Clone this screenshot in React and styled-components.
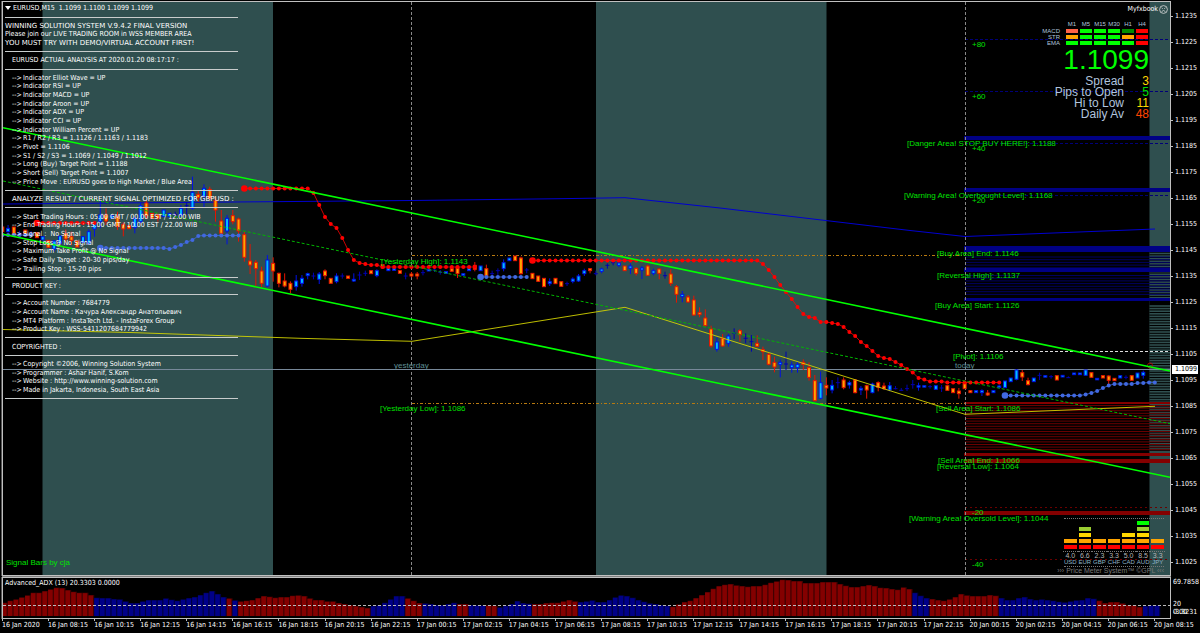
import React from 'react';
import styled, { createGlobalStyle } from 'styled-components';

const GlobalStyle = createGlobalStyle`
  * { box-sizing: border-box; }
  body {
    margin: 0;
    background: #000;
    color: #fff;
    font-family: "DejaVu Sans Condensed", "DejaVu Sans", sans-serif;
    font-size: 7px;
  }
`;

const Terminal = styled.main`
  display: grid;
  grid-template-columns: 1fr 29px;
  padding: 1px 0 0 2px;
  background: #000;
`;
const Pane = styled.section`
  position: relative;
  border: 1px solid #c0c0c0;
  margin-bottom: ${({ $gap }) => ($gap ? '1px' : '0')};
  box-shadow: ${({ $gap }) => ($gap ? '0 1px 0 #808080, -1px 0 0 #555' : '-1px 0 0 #555')};
`;
const Plot = styled.svg`
  display: block;
  width: 100%;
  height: auto;
`;
const ChartText = styled.text`
  font-family: "Liberation Sans", Arial, sans-serif;
  font-size: 8px;
  fill: ${({ $dim }) => ($dim ? '#5f8f94' : '#00e000')};
`;

/* left comment block */
const Comment = styled.div`
  position: absolute;
  top: 2px;
  left: 2px;
  width: 260px;
  height: 399px;
  display: grid;
  grid-auto-rows: 1fr;
  align-items: center;
  line-height: 8px;
  white-space: pre;
`;
const Line = styled.div`
  display: flex;
  padding-left: ${({ $indent }) => ($indent ? '7px' : '0')};
  font-family: ${({ $wide }) => ($wide ? '"DejaVu Sans", sans-serif' : 'inherit')};
`;
const Title = styled.h1`
  display: flex;
  align-items: center;
  gap: 2px;
  margin: 0;
  font-size: 7px;
  font-weight: 400;
`;
const Arrow = styled.span`
  width: 11px;
`;
const Rule = styled.hr`
  width: 233px;
  margin: 0;
  border: 0;
  border-top: 1px solid #c8cccc;
`;
const Caret = styled.svg`
  width: 6px;
  height: 4px;
`;
const Credit = styled.div`
  position: absolute;
  left: 3px;
  bottom: 7px;
  font: 8px/10px "Liberation Sans", Arial, sans-serif;
  color: #00e000;
`;

/* right hand info block */
const Advisor = styled.div`
  position: absolute;
  top: 2px;
  right: 2px;
  display: flex;
  align-items: center;
  gap: 1px;
  line-height: 10px;
`;
const Info = styled.div`
  position: absolute;
  top: 17px;
  right: 20px;
  display: flex;
  flex-direction: column;
  align-items: flex-end;
  font-family: "Liberation Sans", Arial, sans-serif;
`;
const SignalTable = styled.table`
  border-spacing: 2px;
  font-size: 6px;
  line-height: 4px;
  color: #b0c4de;
  th {
    padding: 0;
    height: 4px;
    font-weight: 400;
    text-align: right;
  }
  thead th {
    height: 6px;
    line-height: 6px;
    text-align: center;
  }
  th:first-child { padding-right: 4px; }
`;
const Signal = styled.td`
  width: 12px;
  height: 4px;
  padding: 0;
  background: ${({ $color }) => $color};
`;
const Price = styled.div`
  margin: 0 1px 4px 0;
  font-size: 28px;
  line-height: 25px;
  color: #0f0;
`;
const Stats = styled.dl`
  display: grid;
  grid-template-columns: auto 25px;
  margin: 0 1px 0 0;
  font-size: 12px;
  line-height: 11px;
  text-align: right;
  color: #b0c4de;
`;
const Stat = styled.dd`
  margin: 0;
  color: ${({ $color }) => $color};
`;

/* currency strength */
const Meter = styled.div`
  position: absolute;
  right: 6px;
  bottom: 0;
  width: 112px;
  display: flex;
  flex-direction: column;
  align-items: flex-end;
  font-family: "Liberation Sans", Arial, sans-serif;
`;
const MeterGrid = styled.div`
  display: grid;
  grid-template-columns: repeat(7, 1fr);
  column-gap: 2px;
  align-items: end;
  width: 100px;
  border-top: 1px dotted #777;
  border-bottom: 1px dotted #777;
  padding-top: 2px;
`;
const Currency = styled.div`
  display: flex;
  flex-direction: column;
  gap: 2px;
`;
const Block = styled.span`
  height: 4px;
  background: ${({ $color }) => $color};
`;
const Reading = styled.span`
  border-top: ${({ $code }) => ($code ? '0' : '1px dotted #777')};
  margin: ${({ $code }) => ($code ? '-2px -1px 0' : '0 -1px')};
  font-size: ${({ $code }) => ($code ? '6px' : '7px')};
  line-height: 7px;
  text-align: center;
  color: ${({ $code }) => ($code ? '#8fb4c8' : '#b4b4b4')};
`;
const MeterFooter = styled.div`
  font-size: 7px;
  line-height: 8px;
  white-space: nowrap;
  color: #787878;
`;

/* axes */
const PriceAxis = styled.aside`
  position: relative;
  padding-top: 2px;
`;
const PriceTick = styled.div`
  display: flex;
  align-items: center;
  gap: 2px;
  height: 26px;
  &::before {
    content: '';
    width: 2px;
    height: 1px;
    background: #c0c0c0;
  }
`;
const CurrentPrice = styled.div`
  position: absolute;
  top: 364px;
  left: 1px;
  right: 2px;
  padding-left: 3px;
  background: #fff;
  color: #000;
  line-height: 9px;
`;
const AdxAxis = styled.aside`
  display: grid;
  grid-template-rows: 22px 8px 8px;
  padding-left: 2px;
  line-height: 11px;
`;
const Overlap = styled.div`
  display: grid;
  span { grid-area: 1 / 1; }
`;
const TimeAxis = styled.footer`
  grid-column: 1 / -1;
  display: grid;
  grid-template-columns: repeat(26, 1fr);
  height: 14px;
`;
const Time = styled.time`
  white-space: nowrap;
  line-height: 8px;
  &::before {
    content: '';
    display: block;
    width: 1px;
    height: 2px;
    background: #c0c0c0;
  }
`;
const AdxTitle = styled.h2`
  position: absolute;
  top: 1px;
  left: 2px;
  margin: 0;
  font-size: 7px;
  font-weight: 400;
  line-height: 9px;
`;

const STEP = 5.7625;
const barX = (k) => 2.3 + STEP * k;

// '-' rule, '>' arrow item, '#' heading, '=' banner
const comment = [
  '-',
  '=WINNING SOLUTION SYSTEM V.9.4.2 FINAL VERSION',
  'Please join our LIVE TRADING ROOM in WSS MEMBER AREA',
  '=YOU MUST TRY WITH DEMO/VIRTUAL ACCOUNT FIRST!',
  '-',
  '#EURUSD ACTUAL ANALYSIS AT 2020.01.20 08:17:17 :',
  '-',
  '>Indicator Elliot Wave = UP',
  '>Indicator RSI = UP',
  '>Indicator MACD = UP',
  '>Indicator Aroon = UP',
  '>Indicator ADX = UP',
  '>Indicator CCI = UP',
  '>Indicator William Percent = UP',
  '>R1 / R2 / R3 = 1.1126 / 1.1163 / 1.1183',
  '>Pivot = 1.1106',
  '>S1 / S2 / S3 = 1.1069 / 1.1049 / 1.1012',
  '>Long (Buy) Target Point = 1.1188',
  '>Short (Sell) Target Point = 1.1007',
  '>Price Move : EURUSD goes to High Market / Blue Area',
  '-',
  '#=ANALYZE RESULT / CURRENT SIGNAL OPTIMIZED FOR GBPUSD :',
  '-',
  '>Start Trading Hours : 05.00 GMT / 00.00 EST / 12.00 WIB',
  '>End Trading Hours : 15.00 GMT / 10.00 EST / 22.00 WIB',
  '>Signal :  No Signal',
  '>Stop Loss @ No Signal',
  '>Maximum Take Profit @ No Signal',
  '>Safe Daily Target : 20-30 pips/day',
  '>Trailing Stop : 15-20 pips',
  '-',
  '#PRODUCT KEY :',
  '-',
  '>Account Number : 7684779',
  '>Account Name : Качура Александр Анатольевич',
  '>MT4 Platform : InstaTech Ltd. - InstaForex Group',
  '>Product Key : WSS-5411207684779942',
  '-',
  '#COPYRIGHTED :',
  '-',
  '>Copyright ©2006, Winning Solution System',
  '>Programmer : Ashar Hanif, S.Kom',
  '>Website : http://www.winning-solution.com',
  '>Made in Jakarta, Indonesia, South East Asia',
  '-',
];

// each run: first bar, top offset, bars as "kind bodyTop bodyBottom high low" in thirds of a unit
const candleRuns = [
  [0, 165, `r 186 200 183 203,b 190 200 180 203,r 186 208,n 205 197 212,r 195 212,n 205 198 212,r 203 218,b 215 225,
    r 226 247,b 228 252 225 260,b 213 236,r 206 222 193 232,r 215 226 200 240,r 228 246,b 215 232,b 200 235 193 240,
    b 176 192 168 215,b 150 170 108 190,r 150 168 130 180,b 152 160,r 155 185 140 195,r 178 192 172 214,r 182 191,
    b 160 188 155 205,b 122 170 112 175,r 114 152 108 162,r 145 160,r 150 160 145 170,b 135 155,b 145 155,n 148 140 156,
    b 130 150 120 155,n 122 112 148,b 82 130 35 134,r 88 98 78 110,b 70 94 58 126,r 73 100 65 104,r 106 135 95 170,
    r 168 205 135 210,b 160 198 150 238,r 152 170 135 178,r 162 198 158 230`],
  [42, 170, `r 194 262 185 275,r 273 285 222 312,r 277 296 270 348,r 303 340 290 352,b 270 348 255 352,r 280 303 262 335,
    r 310 340 308 352,r 333 348 310 352,r 340 358 334 370,b 333 350 315 362,b 325 340 315 350,b 311 317 308 328,n 318 308 328,
    b 312 328 306 342,r 303 317 298 328,r 325 340,b 318 335 310 340,n 318 310 326,r 318 325,b 328 333 310 336,n 315 305 330,
    n 310 302 318,r 302 311,b 302 317 298 322,r 284 294,b 294 302,b 296 301,r 302 310,n 318 308 328,r 312 318 306 322,
    r 312 318 306 328,n 308 300 316,b 298 303,n 300 292 306,n 307 300 314,b 305 310,r 296 304,r 292 311 288 324,b 311 316,
    b 296 302,r 286 298 276 304,b 288 302,r 296 318 284 320,n 311 302 318,n 302 295 315,b 278 296 268 304,b 264 272,
    r 258 272,r 264 311 260 314,n 300 294 310,r 310 326,r 318 334,r 325 350,b 335 341 325 348,r 325 341`],
  [97, 180, `r 305 319,n 311 305 318,b 297 304 292 310,b 288 303 282 306,b 272 281 266 288,r 266 272 264 280,n 281 272 286,
    b 267 274 263 280,n 256 250 266,n 248 242 256,b 249 256 242 262,r 258 272,b 258 265 250 282,r 265 280 262 287,
    b 264 270 258 297,r 258 286 254 288,b 272 280 266 286,r 267 280 265 298,n 287 275 296,r 282 310 268 318,
    r 320 343 315 368,b 343 350 333 367,r 351 366 345 368,r 360 405 347 407,r 398 404 382 412,r 414 437 388 440,
    r 447 498 437 503,b 486 508 472 515,r 475 498 462 500,b 468 490 462 500,n 460 445 477,r 452 464 448 485,
    n 475 460 490,n 485 465 515,r 490 499 466 502,r 509 515 500 540,r 523 553 518 556,r 547 561 530 577,
    b 547 553 538 592,n 552 515 570,b 555 563 545 578,b 553 563 545 578,r 547 553 538 570,r 563 592 547 602,
    r 602 662 585 664,b 608 655 575 658,r 616 624 592 646,b 616 630 600 640,n 608 592 625,r 600 623 592 628,
    b 608 615 602 626,r 600 638 597 640,b 625 630 618 645,r 617 630 614 656,b 612 638 608 640,r 608 622 604 634,
    r 618 626 608 630,b 617 630 606 634,n 626 618 628,n 631 624 632,n 626 614 633`],
  [158, 350, `n 104 90 116,b 107 111 98 122,b 107 111,n 110 105 116,b 107 118,n 114 105 126,r 107 121,r 116 128,
    r 123 131 114 146,r 100 116,r 122 128,b 122 128,b 122 128 118 138,r 129 135 120 138,b 122 128,b 108 112 104 116,
    b 93 113,b 84 95,b 60 88 58 91,r 68 81 60 93,r 92 104 83 106,b 84 95,n 76 68 90,b 77 81,n 80 75 86,r 77 90,
    b 76 81,n 83 79 84,b 69 74,b 69 74,b 60 76,r 68 82,b 85 89,r 77 84,r 78 91 76 104,r 85 92,b 77 84,n 82 76 88,
    r 77 91,b 69 84,b 67 76 62 86`],
];

const candles = candleRuns.flatMap(([start, top, rows]) =>
  rows.split(',').map((row, i) => {
    const [kind, ...v] = row.trim().split(/\s+/);
    const y = v.map((n) => top + Number(n) / 3);
    if (kind === 'n') return { k: start + i, kind, open: y[0], close: y[0], high: y[1], low: y[2] };
    return { k: start + i, kind, open: y[0], close: y[1], high: y[2] ?? y[0], low: y[3] ?? y[1] };
  })
);

const flat = (n, y) => Array(n).fill(y);
const trails = [
  { start: 0, color: '#4169e1', small: true, ys: flat(6, 235) },
  { start: 6, color: '#f00', ys: flat(11, 223) },
  { start: 17, color: '#4169e1', ys: [...flat(12, 248), 249, 247, 245, 242, 240, 236, ...flat(7, 235.5)] },
  { start: 42, color: '#f00', ys: [...flat(12, 188.5), 193, 205, 217, 224, 228, 238, 250, 260, 263, 264, 265, 265, ...flat(17, 267)] },
  { start: 83, color: '#4169e1', ys: flat(9, 277) },
  {
    start: 92,
    color: '#f00',
    ys: [...flat(40, 260.5), 264, 270, 277, 285, 292, 299, 307, 314, 317, 318, 322, 322, 323, 324, 327, 332, 336, 342, 346,
      351, 356, 358, 359, 362, 365, 369, 372.5, 378, 379.5, 381.5, 381.5, 381.5, ...flat(10, 382.5)],
  },
  { start: 174, color: '#4169e1', ys: [...flat(13, 395.5), 395.5, 394.5, 393, 391, 388, 385.5, 384, 384, 384, 384, 383, 383, 382.5, 382.5] },
];

// ADX histogram runs, tops in thirds above the baseline
const adxRuns = [
  ['r', [188, 182, 178, 172, 166, 158, 158, 153, 148, 143, 144, 150, 155, 158, 158, 165]],
  ['b', [173, 174, 174, 177, 178, 184, 189, 189, 184, 180, 180, 180, 175, 179, 182, 178, 174, 171, 165, 158, 153, 162, 171]],
  ['r', [175]],
  ['b', [181]],
  ['r', [184, 182, 180, 174, 168, 170, 173, 171, 171, 167, 166, 168, 175, 180, 180, 184, 184, 189, 192, 195, 198, 201, 204]],
  ['b', [198, 196, 188, 178, 168, 168]],
  ['r', [175, 182, 189]],
  ['b', [190, 192, 195, 195, 192, 188]],
  ['r', [192, 192]],
  ['b', [195, 196, 196]],
  ['r', [196, 197]],
  ['b', [202, 197, 192, 183, 189, 191]],
  ['r', [192, 192, 189, 188, 188, 184, 180, 184]],
  ['b', [186, 184, 181, 186, 186, 180, 172, 166, 168, 173, 180, 185, 190, 192, 195, 197]],
  ['r', [200, 193, 186, 182, 174, 165, 156, 146, 138, 134, 132, 136, 138, 140, 138, 138, 134, 128, 124, 119, 120, 123, 123,
    129, 129, 129, 126, 126, 126, 132, 137, 141, 141, 138, 135, 138, 143, 144, 147, 149, 142, 147]],
  ['b', [158, 167, 174]],
  ['r', [177, 180, 182, 178, 171, 162, 166, 168, 168, 168, 165, 167]],
  ['b', [174, 180, 180, 174, 171, 177, 180, 178, 180, 182, 185, 187, 184, 181, 180, 174, 176]],
  ['r', [182, 189, 186, 186, 190, 195, 196, 201]],
  ['b', [198, 196, 196]],
];
const adxBars = adxRuns.flatMap(([kind, tops]) => tops.map((t) => ({ kind, y: 540 + t / 3 })));

const areaLabels = [
  [907, 146, '[Danger Area! STOP BUY HERE!]: 1.1188'],
  [904, 198, '[Warning Area! Overbought Level]: 1.1168'],
  [937, 256, '[Buy Area] End: 1.1146'],
  [937, 278, '[Reversal High]: 1.1137'],
  [935, 308, '[Buy Area] Start: 1.1126'],
  [953, 359, '[Pivot]: 1.1106'],
  [936, 411, '[Sell Area] Start: 1.1086'],
  [938, 463, '[Sell Area] End: 1.1066'],
  [937, 469, '[Reversal Low]: 1.1064'],
  [909, 521, '[Warning Area! Oversold Level]: 1.1044'],
  [381, 264, '[Yesterday High]: 1.1143'],
  [380, 411, '[Yesterday Low]: 1.1086'],
  [972, 47, '+80'],
  [972, 99, '+60'],
  [972, 151, '+40'],
  [972, 203, '+20'],
  [972, 515, '-20'],
  [972, 567, '-40'],
];

const prices = Array.from({ length: 22 }, (_, i) => (1.1235 - i * 0.001).toFixed(4));

const hour = (h) => `${String(h).padStart(2, '0')}:15`;
const times = [
  '16 Jan 2020',
  ...[8, 10, 12, 14, 16, 18, 20, 22].map((h) => `16 Jan ${hour(h)}`),
  ...[0, 2, 4, 6, 8, 10, 12, 14, 16, 18, 20, 22].map((h) => `17 Jan ${hour(h)}`),
  ...[0, 2, 4, 6, 8].map((h) => `20 Jan ${hour(h)}`),
];

const frames = ['M1', 'M5', 'M15', 'M30', 'H1', 'H4'];
const signals = [
  ['MACD', ['#ff6347', '#0f0', '#0f0', '#0f0', '#008c00', '#f00']],
  ['STR', ['#ffa500', '#0f0', '#0f0', '#0f0', '#ffa500', '#f00']],
  ['EMA', ['#0f0', '#0f0', '#0f0', '#0f0', '#0f0', '#f00']],
];
const stats = [
  ['Spread', '3', '#ffd700'],
  ['Pips to Open', '5', '#00e000'],
  ['Hi to Low', '11', '#ffd700'],
  ['Daily Av', '48', '#ff4500'],
];
const levels = ['#f00', '#ffa500', '#ffd700', '#9acd32', '#0f0'];
const currencies = [
  ['USD', '4.0', 2],
  ['EUR', '6.6', 4],
  ['GBP', '2.3', 2],
  ['CHF', '3.3', 2],
  ['CAD', '5.0', 3],
  ['AUD', '8.5', 5],
  ['JPY', '3.3', 2],
];

const stripes = (from, to, step) => {
  const out = [];
  for (let y = from; y < to; y += step) out.push(y);
  return out;
};

const Candle = ({ k, kind, open, close, high, low }) => {
  const x = barX(k);
  if (kind === 'n') {
    return <path d={`M${x} ${high}V${low}M${x - 2} ${open}H${x + 2}`} stroke="#0000b4" fill="none" />;
  }
  const up = kind === 'b';
  return (
    <g stroke={up ? '#0010e6' : '#e61400'}>
      <path d={`M${x} ${high}V${low}`} />
      <rect x={x - 1.5} y={open} width="3" height={Math.max(close - open, 1.5)} fill={up ? '#00bfff' : '#ffa500'} />
    </g>
  );
};

const Trail = ({ start, color, small, ys }) => (
  <g fill={color}>
    <polyline points={ys.map((y, i) => `${barX(start + i)},${y}`).join(' ')} fill="none" stroke={color} strokeWidth="0.8" />
    {ys.map((y, i) => (
      <circle key={i} cx={barX(start + i)} cy={y} r={i === 0 && !small ? 3.3 : 2} />
    ))}
  </g>
);

const PriceChart = () => (
  <Plot viewBox="3 2 1167 573" role="img" aria-label="EURUSD M15 price chart">
    <g fill="#2f4f4f">
      <rect x="42.5" y="2" width="230.5" height="573" />
      <rect x="596" y="2" width="230.5" height="573" />
      <rect x="1149.5" y="2" width="20.5" height="573" />
    </g>
    <rect x="1149.5" y="252" width="20.5" height="200" fill="#000" />
    <g stroke="#2f4f4f" strokeWidth="1.6">
      {[...stripes(253.5, 298, 2.6), ...stripes(306, 452, 2.6)].map((y) => (
        <path key={y} d={`M1149.5 ${y}H1170`} />
      ))}
    </g>

    <g stroke="#000078">
      {[...stripes(257, 268, 2.7), ...stripes(275.5, 297, 2.7)].map((y) => (
        <path key={y} d={`M965 ${y}H1170`} strokeWidth="0.8" />
      ))}
      <path d="M965 39.5H1170M965 91.5H1170M965 143.5H1170M965 195.5H1170" strokeDasharray="3 2" />
    </g>
    <g fill="#000084">
      <rect x="964" y="136" width="206" height="4" />
      <rect x="964" y="188" width="206" height="4" />
      <rect x="964" y="246" width="206" height="6" />
      <rect x="964" y="268" width="206" height="4" />
      <rect x="964" y="298" width="206" height="3" />
    </g>
    <g stroke="#6a0000">
      {stripes(405.5, 452, 2.6).map((y) => (
        <path key={y} d={`M965 ${y}H1170`} />
      ))}
      <path d="M965 507.5H1170M965 559.5H1170" strokeDasharray="2 3" />
    </g>
    <g fill="#840000">
      <rect x="964" y="402" width="206" height="2" />
      <rect x="964" y="453" width="206" height="3" />
      <rect x="964" y="459" width="206" height="4" />
      <rect x="964" y="511" width="206" height="4" />
    </g>

    <path d="M412 255.5H965M412 403.5H965" stroke="#b87a10" strokeDasharray="3 2 1 2" />
    <path d="M965 351.5H1170" stroke="#ddd" strokeDasharray="3 2" />
    <path d="M411.5 2V575M965.5 2V575" stroke="#888" strokeDasharray="3 2" />
    <path d="M3 369.5H1170" stroke="#778899" />

    <polyline points="3,204 293,201.5 412,200.5 560,198.7 625,197.7 720,208 910,230.5 965,236.5 1155,229" fill="none" stroke="#0000d0" />
    {candles.map((c) => (
      <Candle key={c.k} {...c} />
    ))}
    {trails.map((t) => (
      <Trail key={t.start} {...t} />
    ))}
    <circle cx="1150" cy="365.5" r="2.5" fill="none" stroke="#c00000" strokeWidth="0.8" />
    <polyline points="3,329.5 130,332.5 300,338.3 412,341.3 560,317.7 625,307.3 910,397 965,414.3 1155,406.3" fill="none" stroke="#d2d200" strokeWidth="0.9" />
    <path d="M3 181L1170 423.7" stroke="#00b400" strokeDasharray="3 2" />
    <path d="M3 127.8L1170 371M3 234.2L1170 477.3" stroke="#0f0" strokeWidth="1.6" />

    {areaLabels.map(([x, y, label]) => (
      <ChartText key={label} x={x} y={y}>{label}</ChartText>
    ))}
    <ChartText $dim x="394" y="368">yesterday</ChartText>
    <ChartText $dim x="955" y="368">today</ChartText>
  </Plot>
);

const AdxChart = () => (
  <Plot viewBox="3 578 1167 40" role="img" aria-label="Advanced ADX histogram">
    {adxBars.map(({ kind, y }, i) => (
      <g key={i}>
        <rect x={2 + STEP * i} y={y} width="5.8" height={616 - y} fill={kind === 'r' ? '#400000' : '#000040'} />
        <rect x={2 + STEP * i} y={y + 0.5} width="4.6" height={615.5 - y} fill={kind === 'r' ? '#840000' : '#000088'} />
      </g>
    ))}
    <path d="M3 605.5H1170" stroke="#bbb" strokeDasharray="3 2" />
  </Plot>
);

const CommentLine = ({ text }) => {
  if (text === '-') return <Rule />;
  if (text[0] === '>') return <Line $indent><Arrow>--&gt;</Arrow>{text.slice(1)}</Line>;
  const [, marks, body] = text.match(/^([#=]*)(.*)$/);
  return <Line $indent={marks.includes('#')} $wide={marks.includes('=')}>{body}</Line>;
};

const App = () => (
  <>
    <GlobalStyle />
    <Terminal>
      <Pane $gap>
        <PriceChart />
        <Comment>
          <Title>
            <Caret viewBox="0 0 6 4"><path d="M0 0H6L3 4Z" fill="#fff" /></Caret>
            {'EURUSD,M15  1.1099 1.1100 1.1099 1.1099'}
          </Title>
          {comment.map((text, i) => (
            <CommentLine key={i} text={text} />
          ))}
        </Comment>
        <Credit>Signal Bars by cja</Credit>

        <Advisor>
          Myfxbook
          <svg width="9" height="9" viewBox="0 0 9 9" fill="none" stroke="#ddd" strokeWidth="0.8">
            <circle cx="4.5" cy="4.5" r="3.9" />
            <path d="M2.6 6.6Q4.5 4.4 6.4 6.6M2.6 2.8L3.8 3.8M6.4 2.8L5.2 3.8" />
          </svg>
        </Advisor>

        <Info>
          <SignalTable>
            <thead>
              <tr>
                <th />
                {frames.map((f) => <th key={f} scope="col">{f}</th>)}
              </tr>
            </thead>
            <tbody>
              {signals.map(([name, colors]) => (
                <tr key={name}>
                  <th scope="row">{name}</th>
                  {colors.map((c, i) => <Signal key={i} $color={c} />)}
                </tr>
              ))}
            </tbody>
          </SignalTable>
          <Price>1.1099</Price>
          <Stats>
            {stats.map(([name, value, color]) => (
              <React.Fragment key={name}>
                <dt>{name}</dt>
                <Stat $color={color}>{value}</Stat>
              </React.Fragment>
            ))}
          </Stats>
        </Info>

        <Meter>
          <MeterGrid>
            {currencies.map(([code, value, level]) => (
              <Currency key={code}>
                {levels.slice(0, level).reverse().map((c) => <Block key={c} $color={c} />)}
                <Reading>{value}</Reading>
                <Reading $code>{code}</Reading>
              </Currency>
            ))}
          </MeterGrid>
          <MeterFooter>››› Price Meter System™ ©GPL ‹‹‹</MeterFooter>
        </Meter>
      </Pane>
      <PriceAxis>
        {prices.map((p) => <PriceTick key={p}>{p}</PriceTick>)}
        <CurrentPrice>1.1099</CurrentPrice>
      </PriceAxis>

      <Pane>
        <AdxChart />
        <AdxTitle>Advanced_ADX (13) 20.3303 0.0000</AdxTitle>
      </Pane>
      <AdxAxis>
        <span>69.7858</span>
        <span>20</span>
        <Overlap>
          <span>0.00</span>
          <span>-3.3231</span>
        </Overlap>
      </AdxAxis>

      <TimeAxis>
        {times.map((t) => <Time key={t}>{t}</Time>)}
      </TimeAxis>
    </Terminal>
  </>
);

export default App;
